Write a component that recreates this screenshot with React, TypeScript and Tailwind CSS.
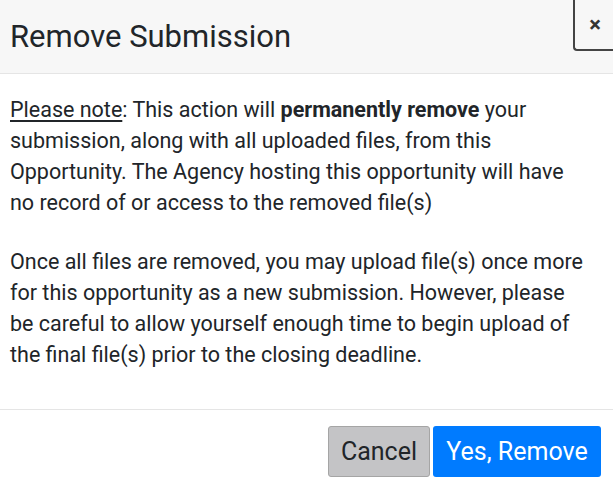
export default function App() {
  return (
    <div className="w-[613px] h-[490px] bg-white text-[#212529] font-['Roboto',sans-serif] overflow-hidden flex flex-col">
      <div className="relative h-[74px] bg-[#f7f7f7] border-b border-[#e5e5e5] flex items-center pl-[10px]">
        <h2 className="text-[31px] leading-none font-normal">Remove Submission</h2>
        <button className="absolute right-[-10px] top-[-10px] w-[50px] h-[61px] border-l-2 border-b-2 border-[#444] rounded-bl-[4px] flex items-center justify-center pt-[10px] pr-[8px] text-[22px] font-bold text-[#333] leading-none">
          ×
        </button>
      </div>
      <div className="flex-1 pl-[10px] pr-[24px] pt-[20px] text-[21.5px] leading-[31px]">
        <p>
          <span className="underline underline-offset-[3px]">Please note</span>: This action will <b>permanently remove</b> your submission, along with all uploaded files, from this Opportunity. The Agency hosting this opportunity will have no record of or access to the removed file(s)
        </p>
        <p className="mt-[28px]">
          Once all files are removed, you may upload file(s) once more for this opportunity as a new submission. However, please be careful to allow yourself enough time to begin upload of the final file(s) prior to the closing deadline.
        </p>
      </div>
      <div className="h-[81px] border-t border-[#e5e5e5] flex items-start justify-end gap-[3px] pt-[16px] pr-[12px]">
        <button className="h-[51px] w-[102px] bg-[#c4c4c6] border border-[#a5a5a5] rounded-[3px] text-[25px] text-[#212529]">Cancel</button>
        <button className="h-[51px] w-[168px] bg-[#007bff] rounded-[3px] text-[25px] text-white">Yes, Remove</button>
      </div>
    </div>
  )
}
